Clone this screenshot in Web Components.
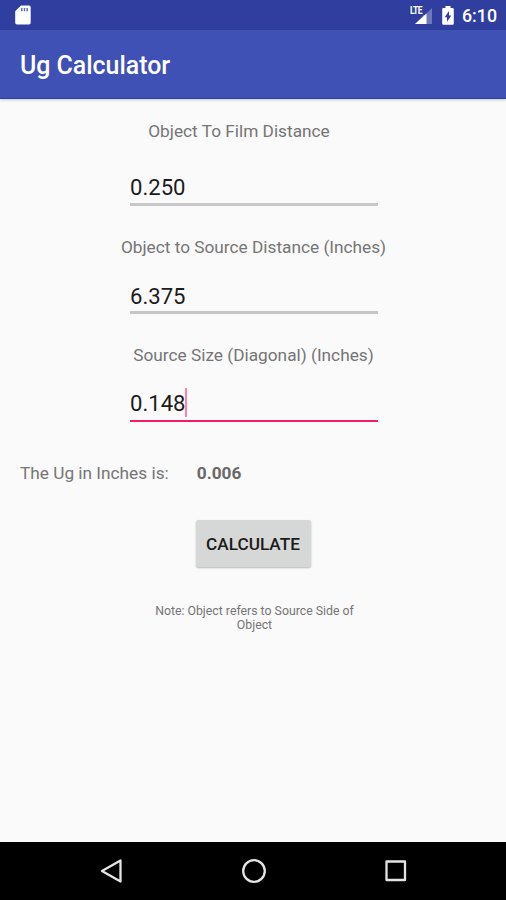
<!DOCTYPE html>
<html lang="en">
<head>
<meta charset="utf-8">
<title>Ug Calculator</title>
<style>
html,body{margin:0;height:100%;overflow:hidden}
body{font-family:Roboto,"Liberation Sans",sans-serif;background:#fafafa}
</style>
</head>
<body>
<ug-screen></ug-screen>
<script>
const define = (name, html) => customElements.define(name, class extends HTMLElement {
  constructor() {
    super();
    this.attachShadow({ mode: "open" }).innerHTML = html;
  }
});

define("status-bar", `
<style>
:host{display:flex;align-items:center;height:30px;background:#303f9f;color:#fff;box-sizing:border-box;padding:0 9px 0 15px}
.gap{flex:1}
svg{display:block;flex:none}
.net{display:grid;width:23px;height:20px;margin-right:9px}
.net>*{grid-area:1/1}
.lte{font-size:10px;line-height:10px;font-weight:700;letter-spacing:-.7px;margin:1px 0 0 0;transform:scaleX(.86);transform-origin:0 0}
.time{font-size:17.8px;line-height:20px;font-weight:500;margin:1px 0 0 8px;width:35px;white-space:nowrap}
</style>
<svg width="16" height="20" viewBox="0 0 16 20"><path fill="#fff" d="M6 .5h8A1.7 1.7 0 0 1 15.7 2v15.8a1.7 1.7 0 0 1-1.7 1.7H1.9A1.7 1.7 0 0 1 .2 17.800V6.300z"/><path stroke="#303f9f" stroke-width="1.5" stroke-opacity=".75" d="M6.800 3v3.200M9.500 3v3.200M12.200 3v3.200"/></svg>
<span class="gap"></span>
<span class="net">
<svg width="23" height="20" viewBox="0 0 23 20"><path fill="#fff" fill-opacity=".3" d="M22 3v16H5l8-8V10h2z"/><path fill="#fff" d="M16.500 8.500V19H5z"/></svg>
<span class="lte">LTE</span>
</span>
<svg width="12" height="19" viewBox="0 0 12 19"><path fill="#fff" d="M3.500 0h5v2H10.500A1.300 1.300 0 0 1 11.800 3.300V17.500a1.300 1.300 0 0 1-1.300 1.300h-9A1.300 1.300 0 0 1 .2 17.500V3.300A1.300 1.300 0 0 1 1.500 2h2z"/><path fill="#303f9f" d="M7 5v4.500h2.300L5 15.800v-4.500H2.700z"/></svg>
<span class="time"><slot></slot></span>`);

define("app-bar", `
<style>
:host{display:flex;align-items:center;height:69px;background:#3f51b5;color:#fff;padding:4px 0 0 20px;box-sizing:border-box;font-size:24.900px;line-height:30px;font-weight:500;border-bottom:1px solid #2541a8;box-shadow:0 1px 3px rgba(0,0,0,.2)}
</style><slot></slot>`);

define("number-field", `
<style>
:host{display:flex;flex-direction:column;align-items:center;--line:#c7c7c7;--gap:26px;--text:33px}
.label{font-size:17.260px;line-height:20px;color:#757575;white-space:nowrap;margin-left:var(--shift,1px)}
.input{box-sizing:border-box;width:248px;height:var(--text);margin:var(--gap) 5px 0 7px;border-bottom:3px solid var(--line);display:flex;align-items:flex-start;font-size:22.1px;line-height:26px;color:#1c1c1c}
.caret{display:none;width:2px;height:29px;margin:-2px 0 0 -1px;background:#ff80ab}
:host([focused]){--line:#f21b66}
:host([focused]) .input{border-bottom-width:2px}
:host([focused]) .caret{display:block}
</style>
<div class="label"><slot name="label"></slot></div>
<div class="input"><span><slot></slot></span><i class="caret"></i></div>`);

define("result-row", `
<style>
:host{display:flex;gap:28px;padding-left:20px;font-size:17.260px;line-height:20px;color:#757575;white-space:nowrap}
b{font-weight:700;color:#686868}
</style><span><slot name="label"></slot></span><b><slot></slot></b>`);

define("raised-button", `
<style>
:host{display:block;align-self:center}
button{display:block;width:115px;height:47px;padding:0;border:0;border-radius:2.500px;background:#d6d7d7;color:#1b1b1b;font:500 17.2px/20px Roboto,"Liberation Sans",sans-serif;box-shadow:0 1px 2px rgba(0,0,0,.28)}
</style><button type="button"><slot></slot></button>`);

define("nav-bar", `
<style>
:host{display:flex;height:58px;background:#000;align-items:center;justify-content:center;gap:118px;padding-left:2px}
svg{display:block;fill:none;stroke:#e4e4e4;stroke-width:2.300;stroke-linejoin:round}
</style>
<svg width="24" height="24" viewBox="0 0 24 24"><path d="M20.500 1.500v21L2 12z"/></svg>
<svg width="24" height="24" viewBox="0 0 24 24"><circle cx="12" cy="12" r="10.800"/></svg>
<svg width="24" height="24" viewBox="0 0 24 24"><path d="M2.500 2.500h18.500v18.500H2.500z"/></svg>`);

define("ug-screen", `
<style>
:host{display:flex;flex-direction:column;width:506px;height:900px;background:#fafafa}
main{flex:1;display:flex;flex-direction:column;padding-top:22px;box-sizing:border-box}
.first{--gap:33px;--shift:-28px;--text:32px}
.second{margin-top:31px;--text:31px}
.third{margin-top:31px;--gap:25px;--text:32px}
.note{align-self:center;width:210px;margin-top:37px;text-align:center;font-size:12.300px;line-height:14px;color:#757575;padding-left:3px}
</style>
<status-bar>6:10</status-bar>
<app-bar>Ug Calculator</app-bar>
<main>
<number-field class="first"><span slot="label">Object To Film Distance</span>0.250</number-field>
<number-field class="second"><span slot="label">Object to Source Distance (Inches)</span>6.375</number-field>
<number-field class="third" focused><span slot="label">Source Size (Diagonal) (Inches)</span>0.148</number-field>
<result-row style="margin-top:41px"><span slot="label">The Ug in Inches is:</span>0.006</result-row>
<raised-button style="margin-top:37px">CALCULATE</raised-button>
<div class="note">Note: Object refers to Source Side of Object</div>
</main>
<nav-bar></nav-bar>`);
</script>
</body>
</html>
